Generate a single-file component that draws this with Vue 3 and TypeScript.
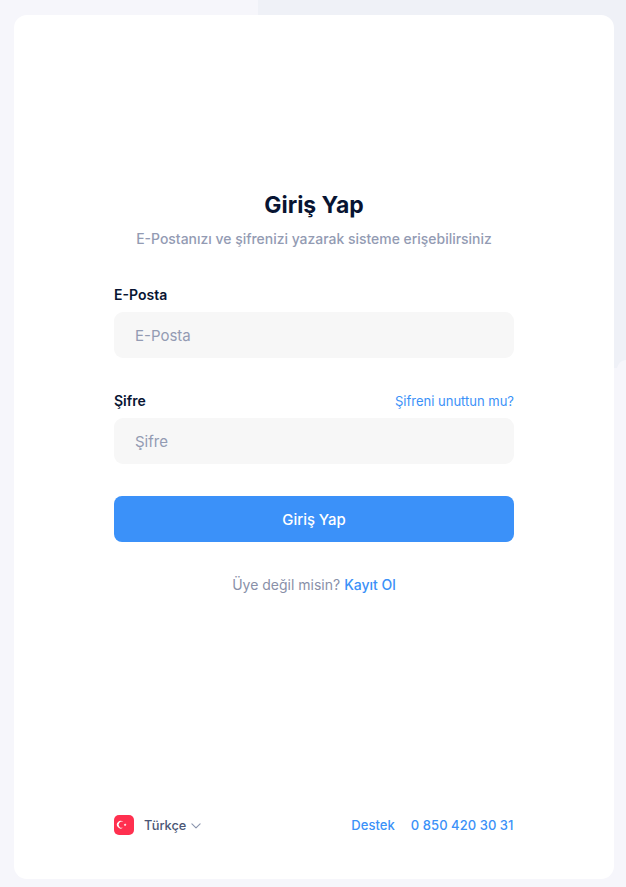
<script setup lang="ts">
import { ref } from 'vue'

const email = ref('')
const password = ref('')
</script>

<template>
  <main class="page">
    <svg class="backdrop" viewBox="0 0 368 368" aria-hidden="true">
      <path d="M0 0H368V360C363 360.5 360.5 363 359 368H0Z" fill="#eff1f7" />
    </svg>
    <section class="card">
      <form class="form" @submit.prevent>
        <h1 class="title">Giriş Yap</h1>
        <p class="subtitle">E-Postanızı ve şifrenizi yazarak sisteme erişebilirsiniz</p>
        <div class="field">
          <div class="field-head"><label for="email">E-Posta</label></div>
          <input id="email" v-model="email" type="text" placeholder="E-Posta" />
        </div>
        <div class="field">
          <div class="field-head">
            <label for="password">Şifre</label>
            <a class="forgot" href="#">Şifreni unuttun mu?</a>
          </div>
          <input id="password" v-model="password" type="password" placeholder="Şifre" />
        </div>
        <button class="submit" type="submit">Giriş Yap</button>
        <p class="signup">Üye değil misin? <a href="#">Kayıt Ol</a></p>
      </form>
      <footer class="footer">
        <button class="language" type="button">
          <svg class="flag" viewBox="0 0 20 20" aria-hidden="true">
            <rect width="20" height="20" rx="5" fill="#ff304f" />
            <path d="M9.3 12.3A3.7 3.7 0 1 1 9.3 7.1A3.05 3.05 0 1 0 9.3 12.3Z" fill="#fff" />
            <path d="M11.1 8.3L11.5 9.2L12.5 9.3L11.8 10L12 11L11.1 10.5L10.2 10.9L10.4 10L9.7 9.3L10.7 9.2Z" fill="#fff" />
          </svg>
          <span class="language-name">Türkçe</span>
          <svg class="chevron" viewBox="0 0 10 6" aria-hidden="true">
            <path d="M.9 .9L5 4.9L9.1 .9" fill="none" stroke="#8a94ad" stroke-width="1.1" stroke-linecap="round" stroke-linejoin="round" />
          </svg>
        </button>
        <nav class="links">
          <a href="#">Destek</a>
          <a href="#">0 850 420 30 31</a>
        </nav>
      </footer>
    </section>
  </main>
</template>

<style>
body {
  background: #f6f6fb;
}
</style>

<style scoped>
.page {
  position: relative;
  box-sizing: border-box;
  height: 887px;
  padding: 15px 12px 8px 14px;
  overflow: hidden;
  background: #f6f6fb;
  font-family: Inter, "Liberation Sans", sans-serif;
}
.page * {
  box-sizing: border-box;
}
.backdrop {
  position: absolute;
  top: 0;
  right: 0;
  width: 368px;
  height: 368px;
}
.card {
  position: relative;
  display: flex;
  flex-direction: column;
  justify-content: space-between;
  height: 864px;
  padding: 175px 100px 43px;
  border-radius: 13px;
  background: #fff;
}
.form {
  display: flex;
  flex-direction: column;
}
.title {
  margin: 0;
  color: #081432;
  font-size: 22.9px;
  font-weight: 700;
  line-height: 30px;
  text-align: center;
}
.subtitle {
  margin: 9px 0 0;
  color: #939bb3;
  font-size: 13.95px;
  font-weight: 500;
  line-height: 20px;
  text-align: center;
  white-space: nowrap;
}
.field {
  margin-top: 35px;
}
.field + .field {
  margin-top: 32px;
}
.field-head {
  display: flex;
  align-items: center;
  justify-content: space-between;
  height: 20px;
  margin-bottom: 8px;
}
.field-head label {
  color: #081432;
  font-size: 14px;
  font-weight: 600;
}
.forgot {
  padding-top: 1px;
  font-size: 13px;
}
a {
  color: #3b91f8;
  text-decoration: none;
}
input {
  display: block;
  width: 100%;
  height: 46px;
  padding: 0 21px;
  border: 0;
  border-radius: 9px;
  outline: 0;
  background: #f7f7f7;
  color: #4b5675;
  font: 400 15px Inter, "Liberation Sans", sans-serif;
}
input::placeholder {
  color: #939bb3;
  opacity: 1;
}
.submit {
  height: 46px;
  margin-top: 32px;
  padding: 2px 0 0;
  border: 0;
  border-radius: 8px;
  background: #3b91f9;
  color: #fff;
  font: 500 14.9px Inter, "Liberation Sans", sans-serif;
}
.signup {
  margin: 33px 0 0;
  color: #8990a8;
  font-size: 14px;
  line-height: 20px;
  text-align: center;
}
.signup a {
  font-weight: 500;
}
.footer,
.language,
.links {
  display: flex;
  align-items: center;
}
.footer {
  justify-content: space-between;
}
.language {
  height: 22px;
  padding: 0;
  border: 0;
  background: none;
  color: #4b5675;
  font: 500 12.8px Inter, "Liberation Sans", sans-serif;
}
.flag {
  width: 20px;
  height: 20px;
}
.language-name {
  margin: 0 5px 0 10px;
}
.chevron {
  width: 10px;
  height: 6px;
  margin-top: 2px;
}
.links {
  gap: 16px;
  padding-right: 0.5px;
  font-size: 13px;
  font-weight: 500;
  letter-spacing: 0.05px;
}
</style>
